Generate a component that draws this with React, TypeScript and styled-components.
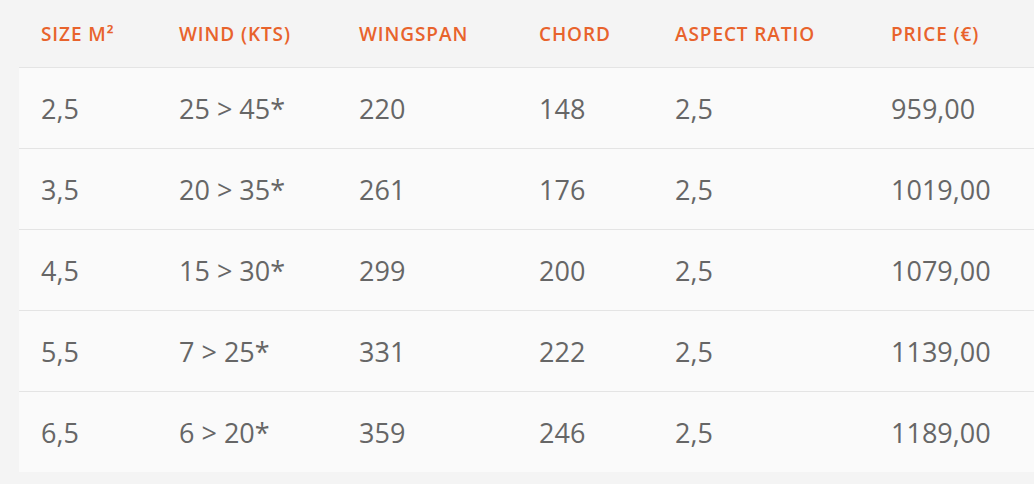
import styled, { createGlobalStyle } from "styled-components";

const GlobalStyle = createGlobalStyle`
  body {
    margin: 0;
    background: #f4f4f4;
    font-family: "Open Sans", "DejaVu Sans", sans-serif;
    overflow: hidden;
  }
`;

const columns = ["Size m²", "Wind (kts)", "Wingspan", "Chord", "Aspect ratio", "Price (€)"];

const rows = [
    ["2,5", "25 > 45*", "220", "148", "2,5", "959,00"],
    ["3,5", "20 > 35*", "261", "176", "2,5", "1019,00"],
    ["4,5", "15 > 30*", "299", "200", "2,5", "1079,00"],
    ["5,5", "7 > 25*", "331", "222", "2,5", "1139,00"],
    ["6,5", "6 > 20*", "359", "246", "2,5", "1189,00"],
];

function App(): React.ReactElement {
    return (
        <>
            <GlobalStyle />
            <Table>
                <HeadRow>
                    {columns.map((c) => (
                        <HeadCell key={c}>{c}</HeadCell>
                    ))}
                </HeadRow>
                {rows.map((r, i) => (
                    <Row key={i}>
                        {r.map((v, j) => (
                            <Cell key={j}>{v}</Cell>
                        ))}
                    </Row>
                ))}
            </Table>
        </>
    );
}

export default App;

const Table = styled.div`
  margin-left: 19px;
  display: flex;
  flex-direction: column;
`;

const Grid = styled.div`
  display: grid;
  grid-template-columns: 138px 180px 180px 136px 216px 1fr;
`;

const HeadRow = styled(Grid)`
  height: 67px;
  box-sizing: border-box;
  padding-top: 2px;
  align-items: center;
`;

const HeadCell = styled.div`
  padding-left: 22px;
  font-size: 19px;
  font-weight: 600;
  letter-spacing: 0.9px;
  text-transform: uppercase;
  color: #e8632c;
  line-height: 1;
`;

const Row = styled(Grid)`
  height: 80px;
  box-sizing: content-box;
  border-top: 1px solid #e4e4e4;
  background: #fafafa;
  align-items: center;
`;

const Cell = styled.div`
  padding-left: 22px;
  padding-top: 1px;
  font-size: 27px;
  color: #666666;
  line-height: 1;
`;
